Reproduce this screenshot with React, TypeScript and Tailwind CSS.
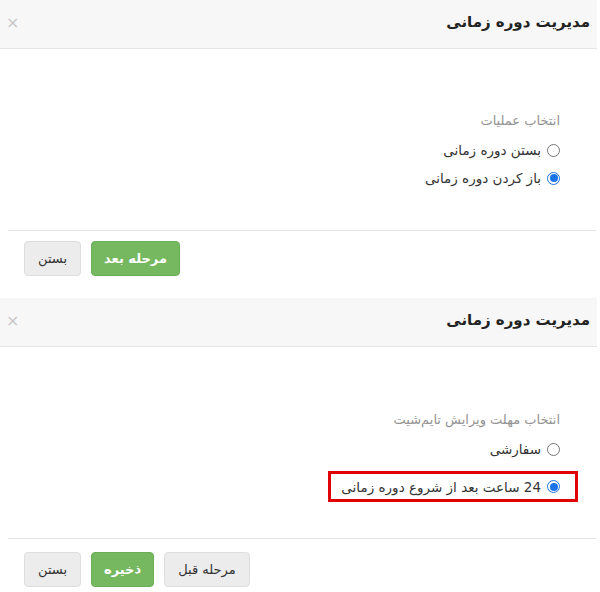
import React from "react";

function Radio({ checked }: { checked?: boolean }) {
  return checked ? (
    <span className="w-[13px] h-[13px] rounded-full border border-[#1a73e8] bg-white flex items-center justify-center shrink-0">
      <span className="w-[8px] h-[8px] rounded-full bg-[#1a73e8]" />
    </span>
  ) : (
    <span className="w-[13px] h-[13px] rounded-full border border-[#767676] bg-white shrink-0" />
  );
}

function Header() {
  return (
    <div className="h-[49px] bg-[#f7f7f7] border-b border-[#e5e5e5] flex items-center justify-between pr-[7px] pl-[6px] mr-[3px]">
      <span className="text-[15px] text-[#222] font-bold leading-none pb-[4px]">مدیریت دوره زمانی</span>
      <span className="text-[#c8c8c8] text-[16px] leading-none pb-[2px]">×</span>
    </div>
  );
}

function Btn({ kind, children }: { kind: "gray" | "green"; children: React.ReactNode }) {
  return kind === "green" ? (
    <button className="h-[35px] px-[12px] rounded-[4px] bg-[#76b85f] border border-[#6cae55] text-white text-[13px] font-bold leading-none">
      {children}
    </button>
  ) : (
    <button className="h-[35px] px-[13px] rounded-[4px] bg-[#ececec] border border-[#dedede] text-[#333] text-[13px] leading-none">
      {children}
    </button>
  );
}

export default function App() {
  return (
    <div dir="rtl" className="w-[600px] h-[592px] bg-white overflow-hidden font-['DejaVu_Sans',sans-serif]">
      {/* Modal 1 */}
      <Header />
      <div className="h-[181px] pt-[63px] pr-[40px]">
        <div className="text-[13px] text-[#939393] leading-[18px]">انتخاب عملیات</div>
        <div className="mt-[11px] flex items-center gap-[6px] text-[13.5px] text-[#333] leading-[18px]">
          <Radio />
          <span>بستن دوره زمانی</span>
        </div>
        <div className="mt-[10px] flex items-center gap-[6px] text-[13.5px] text-[#333] leading-[18px]">
          <Radio checked />
          <span>باز کردن دوره زمانی</span>
        </div>
      </div>
      <div className="ml-[8px] mr-[4px] border-t border-[#e5e5e5] h-[68px] pt-[10px] pl-[16px] flex justify-end gap-[10px]">
        <Btn kind="green">مرحله بعد</Btn>
        <Btn kind="gray">بستن</Btn>
      </div>

      {/* Modal 2 */}
      <Header />
      <div className="h-[191px] pt-[64px] pr-[40px]">
        <div className="text-[13px] text-[#939393] leading-[18px]">انتخاب مهلت ویرایش تایم‌شیت</div>
        <div className="mt-[11px] flex items-center gap-[6px] text-[13.5px] text-[#333] leading-[18px]">
          <Radio />
          <span>سفارشی</span>
        </div>
        <div className="mt-[13px] mr-[-18px] w-[250px] h-[31px] border-[3px] border-[#e00000] flex items-center gap-[6px] pr-[15px] text-[13.5px] text-[#333] leading-[18px]">
          <Radio checked />
          <span>24 ساعت بعد از شروع دوره زمانی</span>
        </div>
      </div>
      <div className="ml-[8px] mr-[4px] border-t border-[#e5e5e5] pt-[13px] pl-[16px] flex justify-end gap-[10px]">
        <Btn kind="gray">مرحله قبل</Btn>
        <Btn kind="green">ذخیره</Btn>
        <Btn kind="gray">بستن</Btn>
      </div>
    </div>
  );
}
